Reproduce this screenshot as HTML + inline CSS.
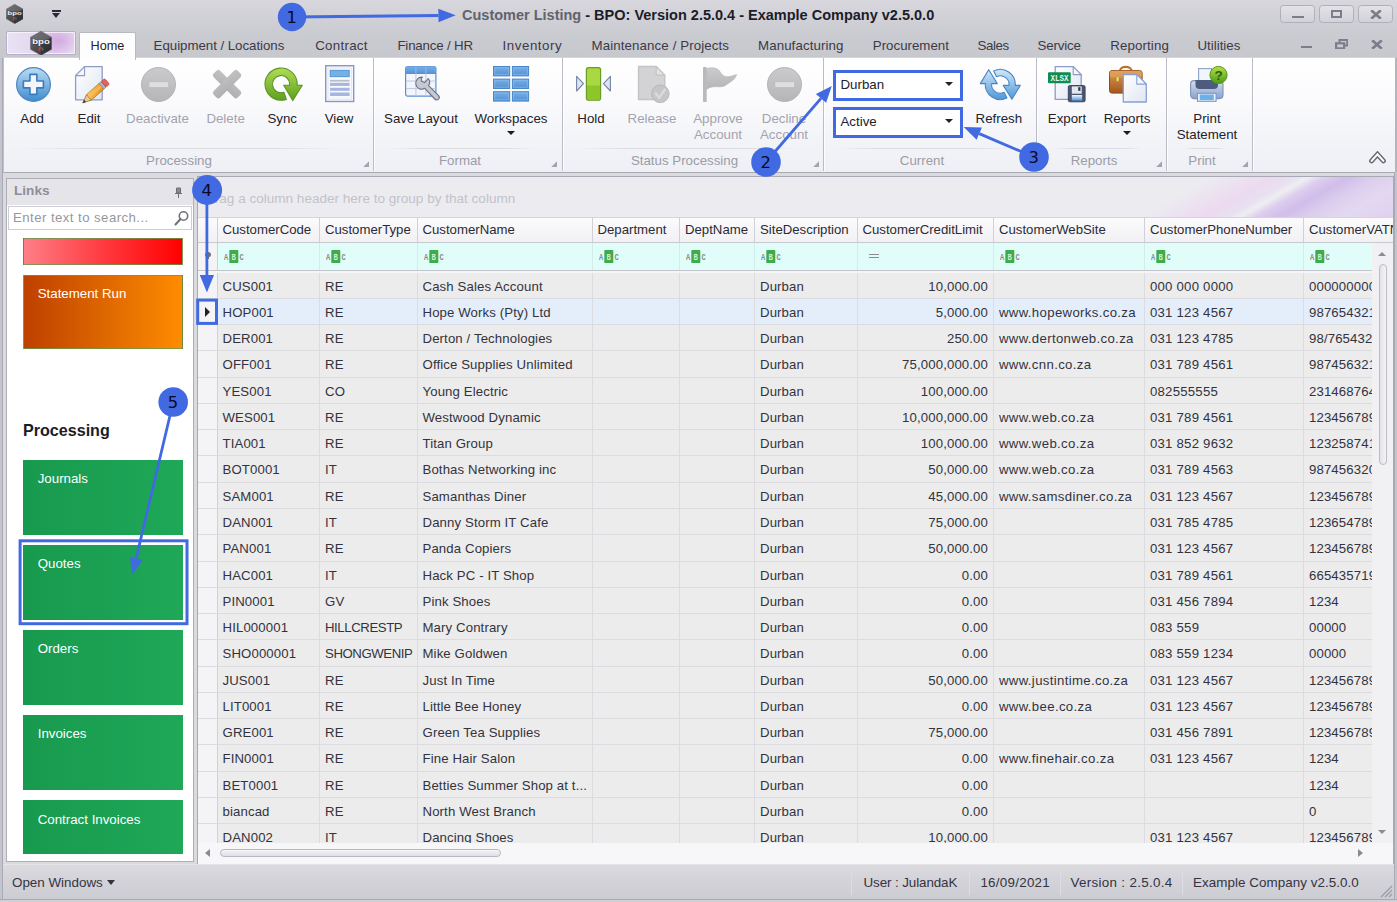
<!DOCTYPE html>
<html lang="en"><head><meta charset="utf-8"><title>Customer Listing - BPO</title>
<style>

*{box-sizing:border-box;margin:0;padding:0}
html,body{width:1397px;height:902px;overflow:hidden;background:#c9c9d0}
body{font-family:"Liberation Sans",sans-serif;font-size:13.2px;color:#2a2a34}
#app{position:relative;width:1397px;height:902px;overflow:hidden;background:#dadadf}
.abs{position:absolute}
.t{position:absolute;white-space:nowrap;line-height:16px}
/* title bar */
#title{position:absolute;left:0;top:0;width:1397px;height:32px;background:linear-gradient(#d7d7dd,#cbcbd2)}
#title .cap{position:absolute;left:462px;top:6px;font-weight:bold;font-size:14.5px;line-height:18px;white-space:nowrap;color:#1c1c28}
#title .cap i{font-style:normal;color:#62626c}
.wb{position:absolute;top:5px;height:17.5px;width:35px;border:1px solid #b0b0ba;border-radius:3.5px;background:linear-gradient(#e2e2e7,#d2d2d8)}
/* tabs */
#tabs{position:absolute;left:0;top:32px;width:1397px;height:27px;background:linear-gradient(#cbcbd2,#c7c7ce)}
#tabs .tab{position:absolute;top:6px;white-space:nowrap;color:#3a3a46;font-size:13.3px;line-height:16px}
#hometab{position:absolute;left:79px;top:32px;width:57px;height:28px;background:#fdfdfe;border:1px solid #b9b9c2;border-bottom:none;border-radius:2px 2px 0 0}
#appbtn{position:absolute;left:6px;top:31.3px;width:69.6px;height:23.4px;border:1px solid #b6b0c6;border-radius:2px;box-shadow:inset 0 0 0 1px rgba(255,255,255,.65);background:radial-gradient(ellipse 22px 14px at 76% 38%,rgba(206,160,222,.75),rgba(206,160,222,0)),linear-gradient(90deg,#e9e2f5,#e5d8f1 40%,#dfc8eb 70%,#e7d9f1)}
/* ribbon */
#ribbon{position:absolute;left:3px;top:57px;width:1393px;height:115.5px;background:linear-gradient(#ffffff,#fbfbfd 35%,#f3f4f8 70%,#eff0f5);border:1px solid #a9a9b3;border-top-color:#d4d4da;border-left-color:#c0c0c8}
.gsep{position:absolute;top:58px;width:1.3px;height:113px;background:#bcbcc6;box-shadow:1px 0 0 rgba(255,255,255,.8)}
.gcap{position:absolute;top:153px;text-align:center;color:#9b9ba6;font-size:13.3px;line-height:16px;white-space:nowrap}
.rb{position:absolute;top:110.5px;text-align:center;font-size:13.3px;line-height:16.5px;color:#22222c;white-space:nowrap;transform:translateX(-50%)}
.rb.dis{color:#a3a3ad}
.ico{position:absolute;top:66px;width:36px;height:36px}
.combo{position:absolute;left:832.5px;width:130px;height:31px;border:3px solid #4169e1;background:#fff}
.combo span{position:absolute;left:5px;top:4.5px;font-size:13.3px;line-height:16px;color:#22222c}
.combo b{position:absolute;right:6.5px;top:9.5px;width:0;height:0;border:4px solid transparent;border-top:4.5px solid #222;border-bottom:none}
/* left */
#links{position:absolute;left:6px;top:178px;width:188px;height:684px;border:1px solid #aeaeb8;background:#fff}
#links .hd{position:absolute;left:0;top:0;width:186px;height:26px;background:#e5e5e9}
#links .hd span{position:absolute;left:7px;top:4px;font-weight:bold;color:#8e8e9a;font-size:13.6px;line-height:16px}
#search{position:absolute;left:1px;top:26.5px;width:184px;height:24.5px;border:1px solid #cdcdd5;background:#fff}
#search span{position:absolute;left:4px;top:3.5px;color:#9696a0;font-size:13.2px;line-height:16px;letter-spacing:.45px}
.tile{position:absolute;left:23.2px;width:160px;color:#fff;font-size:13.3px}
.tile span{position:absolute;left:14.5px;top:11.5px;line-height:16px;white-space:nowrap}
.green{background:linear-gradient(90deg,#189a4e,#1ca254 60%,#1fa858)}
/* grid */
#grid{position:absolute;left:197px;top:176px;width:1197px;height:688.5px;border:1px solid #a9a9b3;background:#ececec;overflow:hidden}
#gp{position:absolute;left:0;top:0;width:1195px;height:40px;background:#ececf0}
#gp span{position:absolute;left:7px;top:14px;color:#c2c2ca;font-size:13.55px;line-height:16px;white-space:nowrap}
.hc{position:absolute;top:40px;height:26px;background:linear-gradient(#fbfbfc,#f1f1f4);border-right:1px solid #d0d0d8;border-bottom:1px solid #c8c8d0;border-top:1px solid #d4d4dc;overflow:hidden;white-space:nowrap;color:#2a2a36;font-size:13.2px;line-height:24px;padding-left:5px}
.fc{position:absolute;top:66px;height:27px;background:#e0fdf9;border-right:1px solid #d2ece8;overflow:hidden}
.row{position:absolute;left:0;width:1175px;height:26.27px;border-bottom:1px solid #dcdce0;background:#ececec}
.row.sel{background:#e4eefb}
.c{position:absolute;top:0;height:100%;letter-spacing:.12px;border-right:1px solid #dcdce0;overflow:hidden;white-space:nowrap;color:#33333d;font-size:13.2px;line-height:27px;padding-left:5px}
.c.r{text-align:right;padding-right:5px;padding-left:0}
.c.w{letter-spacing:.34px}
.c.p{letter-spacing:.22px}
.c.ind{background:#f4f4f6;border-right:1px solid #d0d0d8}
/* status */
#status{position:absolute;left:0;top:864px;width:1397px;height:38px;background:linear-gradient(#dadadf,#d3d3d9 40%,#cbcbd2);border-top:1px solid #e4e4e9}
#status .s{position:absolute;top:10px;font-size:13.4px;line-height:16px;color:#34343e;white-space:nowrap}
#status .sep{position:absolute;top:6px;width:1px;height:24px;background:#b0b0ba;border-right:1px solid #dcdce2}

.frame{position:absolute;background:#c4c4ce}

</style></head>
<body>
<div id="app">
<svg width="0" height="0" style="position:absolute"><defs>
<linearGradient id="gBlue" x1="0" y1="0" x2="0" y2="1"><stop offset="0" stop-color="#bcdcf2"/><stop offset="1" stop-color="#3f8ccf"/></linearGradient>
<linearGradient id="gGrey" x1="0" y1="0" x2="0" y2="1"><stop offset="0" stop-color="#cbcbcd"/><stop offset="1" stop-color="#b5b5b8"/></linearGradient>
<linearGradient id="gGreen" x1="0" y1="0" x2="0" y2="1"><stop offset="0" stop-color="#b0dc54"/><stop offset="1" stop-color="#5ca021"/></linearGradient>
<linearGradient id="gPage" x1="0" y1="0" x2="1" y2="1"><stop offset="0" stop-color="#ffffff"/><stop offset="1" stop-color="#dfe5f2"/></linearGradient>
<linearGradient id="gCell" x1="0" y1="0" x2="0" y2="1"><stop offset="0" stop-color="#78b0e6"/><stop offset="1" stop-color="#5090d4"/></linearGradient>
<linearGradient id="gPencil" x1="0" y1="0" x2="1" y2="1"><stop offset="0" stop-color="#ffcf6a"/><stop offset="1" stop-color="#e58a1f"/></linearGradient>
<linearGradient id="gBrown" x1="0" y1="0" x2="0" y2="1"><stop offset="0" stop-color="#dc9a58"/><stop offset="1" stop-color="#a4561c"/></linearGradient>
<linearGradient id="gPrn" x1="0" y1="0" x2="0" y2="1"><stop offset="0" stop-color="#d4dff0"/><stop offset="1" stop-color="#8ba2cc"/></linearGradient>
<linearGradient id="gGrey2" x1="0" y1="0" x2="1" y2="1"><stop offset="0" stop-color="#c2c2c4"/><stop offset="1" stop-color="#aeaeb1"/></linearGradient>
<linearGradient id="gBlue2" gradientUnits="userSpaceOnUse" x1="0" y1="0" x2="0" y2="31"><stop offset="0" stop-color="#d4e9f9"/><stop offset="1" stop-color="#4f96d6"/></linearGradient>
<linearGradient id="gGreen2" x1="0" y1="0" x2="0" y2="1"><stop offset="0" stop-color="#b4e044"/><stop offset="1" stop-color="#4c9a18"/></linearGradient>
<linearGradient id="gStrip" x1="0" y1="0" x2="0" y2="1"><stop offset="0" stop-color="#f4f8fd"/><stop offset="1" stop-color="#4f96d8"/></linearGradient>
<linearGradient id="gHex" x1="0" y1="0" x2="1" y2="1"><stop offset="0" stop-color="#6e6e72"/><stop offset="1" stop-color="#2c2c30"/></linearGradient>
</defs></svg>
<div id="title">
<svg class="abs" style="left:5.6px;top:4.3px" width="17.4" height="20" viewBox="0 0 22 25"><path d="M11,.3L21.700,6.400V18.600L11,24.700L.3,18.600V6.400Z" fill="url(#gHex)" stroke="#6a6a6e" stroke-width=".6"/><path d="M11,.3L21.700,6.400L11,12.500L.3,6.400Z" fill="#77777b" opacity=".55"/><path d="M11,12.500L21.700,6.400V18.600L11,24.700Z" fill="#2a2a2e" opacity=".45"/><rect x="2.500" y="9" width="17" height="5.200" fill="#3c3c40" opacity=".55"/><text x="11" y="13.600" text-anchor="middle" font-family="Liberation Sans, sans-serif" font-weight="bold" font-size="6.8" fill="#f2f2f4" textLength="18" lengthAdjust="spacingAndGlyphs">bpo</text><path d="M8.500,16.200h3.200v1.800h-1.400v2.600h-1.800z" fill="#c0403c"/><rect x="11.800" y="17" width="1.600" height="3" fill="#4a8a8a" opacity=".7"/></svg>
<div class="abs" style="left:52px;top:10px;width:9px;height:2px;background:#2a2a3c"></div><div class="abs" style="left:52px;top:13px;width:0;height:0;border:4.500px solid transparent;border-top:5px solid #2a2a3c;border-bottom:none"></div>
<div class="cap"><i>Customer Listing</i> - BPO: Version 2.5.0.4 - Example Company v2.5.0.0</div>
<div class="wb" style="left:1280.2px"><div class="abs" style="left:11.2px;top:9.5px;width:11.3px;height:2.5px;background:#7c7c8a"></div></div>
<div class="wb" style="left:1318.9px"><div class="abs" style="left:11.2px;top:3.5px;width:11px;height:8.6px;border:2.2px solid #7c7c8a"></div></div>
<div class="wb" style="left:1357.5px"><svg class="abs" style="left:11.2px;top:3.5px" width="12" height="9" viewBox="0 0 12 9"><path d="M1.2,.3l9.600,8.400M10.800,.3l-9.600,8.400" stroke="#7c7c8a" stroke-width="2.700"/></svg></div>
</div>
<div id="tabs">
<div class="tab" style="left:153.6px;letter-spacing:-0.04px">Equipment / Locations</div>
<div class="tab" style="left:315.2px;letter-spacing:0.29px">Contract</div>
<div class="tab" style="left:397.4px;letter-spacing:-0.17px">Finance / HR</div>
<div class="tab" style="left:502.6px;letter-spacing:0.54px">Inventory</div>
<div class="tab" style="left:591.6px;letter-spacing:0.1px">Maintenance / Projects</div>
<div class="tab" style="left:758px;letter-spacing:0.09px">Manufacturing</div>
<div class="tab" style="left:872.8px;letter-spacing:0px">Procurement</div>
<div class="tab" style="left:977.6px;letter-spacing:-0.44px">Sales</div>
<div class="tab" style="left:1037.5px;letter-spacing:-0.16px">Service</div>
<div class="tab" style="left:1110.2px;letter-spacing:0.12px">Reporting</div>
<div class="tab" style="left:1197.5px;letter-spacing:0px">Utilities</div>
<div class="abs" style="left:1301.1px;top:13.600px;width:11px;height:2.500px;background:#7c7c8a"></div>
<svg class="abs" style="left:1335px;top:6.600px" width="13.400" height="10.500" viewBox="0 0 13.400 10.500"><path d="M4.500,3.500V1.100H12.300V6.500H9.500" fill="none" stroke="#7c7c8a" stroke-width="2"/><rect x="1.100" y="4.300" width="8" height="5.100" fill="none" stroke="#7c7c8a" stroke-width="2.200"/></svg>
<svg class="abs" style="left:1370.700px;top:7.600px" width="12" height="9" viewBox="0 0 12 9"><path d="M1.200,.3l9.600,8.400M10.800,.3l-9.600,8.400" stroke="#7c7c8a" stroke-width="2.700"/></svg>
</div>
<div id="appbtn"></div>
<svg class="abs" style="left:29.6px;top:30.9px" width="22" height="24.6" viewBox="0 0 22 25"><path d="M11,.3L21.700,6.400V18.600L11,24.700L.3,18.600V6.400Z" fill="url(#gHex)" stroke="#6a6a6e" stroke-width=".6"/><path d="M11,.3L21.700,6.400L11,12.500L.3,6.400Z" fill="#77777b" opacity=".55"/><path d="M11,12.500L21.700,6.400V18.600L11,24.700Z" fill="#2a2a2e" opacity=".45"/><rect x="2.500" y="9" width="17" height="5.200" fill="#3c3c40" opacity=".55"/><text x="11" y="13.600" text-anchor="middle" font-family="Liberation Sans, sans-serif" font-weight="bold" font-size="6.8" fill="#f2f2f4" textLength="18" lengthAdjust="spacingAndGlyphs">bpo</text><path d="M8.500,16.200h3.200v1.800h-1.400v2.600h-1.800z" fill="#c0403c"/><rect x="11.800" y="17" width="1.600" height="3" fill="#4a8a8a" opacity=".7"/></svg>
<div id="ribbon"></div>
<div id="hometab"><div class="t" style="left:10.5px;top:5px;font-size:12.7px;color:#22222c">Home</div></div>
<div class="gsep" style="left:372.5px"></div>
<div class="gsep" style="left:561.5px"></div>
<div class="gsep" style="left:822.5px"></div>
<div class="gsep" style="left:1036px"></div>
<div class="gsep" style="left:1166px"></div>
<div class="gsep" style="left:1252px"></div>
<div class="gcap" style="left:3px;width:352px">Processing</div>
<div class="abs" style="left:21px;top:148px;width:322px;height:1px;background:linear-gradient(90deg,rgba(220,220,228,0),#dcdce4 20%,#dcdce4 80%,rgba(220,220,228,0))"></div>
<div class="gcap" style="left:372px;width:176px">Format</div>
<div class="abs" style="left:390px;top:148px;width:146px;height:1px;background:linear-gradient(90deg,rgba(220,220,228,0),#dcdce4 20%,#dcdce4 80%,rgba(220,220,228,0))"></div>
<div class="gcap" style="left:561px;width:247px">Status Processing</div>
<div class="abs" style="left:579px;top:148px;width:217px;height:1px;background:linear-gradient(90deg,rgba(220,220,228,0),#dcdce4 20%,#dcdce4 80%,rgba(220,220,228,0))"></div>
<div class="gcap" style="left:822px;width:200px">Current</div>
<div class="abs" style="left:840px;top:148px;width:170px;height:1px;background:linear-gradient(90deg,rgba(220,220,228,0),#dcdce4 20%,#dcdce4 80%,rgba(220,220,228,0))"></div>
<div class="gcap" style="left:1034px;width:120px">Reports</div>
<div class="abs" style="left:1052px;top:148px;width:90px;height:1px;background:linear-gradient(90deg,rgba(220,220,228,0),#dcdce4 20%,#dcdce4 80%,rgba(220,220,228,0))"></div>
<div class="gcap" style="left:1166px;width:72px">Print</div>
<div class="abs" style="left:1184px;top:148px;width:42px;height:1px;background:linear-gradient(90deg,rgba(220,220,228,0),#dcdce4 20%,#dcdce4 80%,rgba(220,220,228,0))"></div>
<svg class="abs" style="left:362.8px;top:160.800px" width="6.200" height="6.200" viewBox="0 0 7 7"><path d="M7 0v7H0z" fill="#a4a4ae"/></svg>
<svg class="abs" style="left:551.0px;top:160.800px" width="6.200" height="6.200" viewBox="0 0 7 7"><path d="M7 0v7H0z" fill="#a4a4ae"/></svg>
<svg class="abs" style="left:812.5px;top:160.800px" width="6.200" height="6.200" viewBox="0 0 7 7"><path d="M7 0v7H0z" fill="#a4a4ae"/></svg>
<svg class="abs" style="left:1155.5px;top:160.800px" width="6.200" height="6.200" viewBox="0 0 7 7"><path d="M7 0v7H0z" fill="#a4a4ae"/></svg>
<svg class="abs" style="left:1242.3px;top:160.800px" width="6.200" height="6.200" viewBox="0 0 7 7"><path d="M7 0v7H0z" fill="#a4a4ae"/></svg>
<svg class="abs" style="left:15.9px;top:66.9px;overflow:visible" width="35" height="35" viewBox="0 0 35 35"><circle cx="17.5" cy="17.5" r="16.9" fill="url(#gBlue)" stroke="#4b88c4" stroke-width="1.2"/><path d="M13.95,7.399999999999999h6.9v6.55h6.55v6.9h-6.55v6.55h-6.9v-6.55h-6.55v-6.9h6.55z" fill="#f2f6fb" stroke="#3b7bbd" stroke-width="1.6" stroke-linejoin="round"/></svg><div class="rb" style="left:32.2px">Add</div>
<svg class="abs" style="left:74.6px;top:65.8px;overflow:visible" width="36" height="38" viewBox="0 0 36 38"><path d="M9.6,0.6H27.200000000000003V33.800000000000004H0.6V9.6Z" fill="url(#gPage)" stroke="#8d9cc6" stroke-width="1.3" stroke-linejoin="round"/><path d="M0.6,9.6H9.6V0.6Z" fill="#f4f6fb" stroke="#8d9cc6" stroke-width="1.1" stroke-linejoin="round"/><g transform="translate(7.7,37) rotate(-41.7)"><path d="M0,0L8.5,-3.700V3.700Z" fill="#ecc894" stroke="#8a6a3a" stroke-width=".7" stroke-linejoin="round"/><path d="M0,0L3.2,-1.5V1.5Z" fill="#3a3a3a"/><rect x="8.500" y="-3.700" width="16.500" height="7.400" fill="url(#gPencil)" stroke="#b8741a" stroke-width=".7"/><rect x="8.500" y="-1.3" width="16.500" height="2.2" fill="#f6c050" opacity=".8"/><rect x="25" y="-3.700" width="3" height="7.400" fill="#a9b2c4" stroke="#7a8498" stroke-width=".6"/><rect x="28" y="-3.700" width="4.600" height="7.400" rx="1.600" fill="#e8625c" stroke="#b8403c" stroke-width=".7"/></g></svg><div class="rb" style="left:89px">Edit</div>
<svg class="abs" style="left:141px;top:66.9px;overflow:visible" width="35" height="35" viewBox="0 0 35 35"><circle cx="17.5" cy="17.5" r="17" fill="url(#gGrey)" stroke="#b4b4b7" stroke-width="1"/><rect x="7.8" y="14.6" width="19.8" height="6" rx="1.2" fill="#dededf" stroke="#bcbcbf" stroke-width=".9"/></svg><div class="rb dis" style="left:157.5px">Deactivate</div>
<svg class="abs" style="left:211.9px;top:69.3px;overflow:visible" width="30.2" height="30.4" viewBox="0 0 30.2 30.4"><g transform="rotate(45 15.1 15.2)" fill="url(#gGrey2)"><rect x="-1.9" y="10.6" width="34" height="9.200" rx="2.6"/><rect x="10.500" y="-1.8" width="9.200" height="34" rx="2.6"/></g></svg><div class="rb dis" style="left:225.6px">Delete</div>
<svg class="abs" style="left:264.7px;top:67.9px;overflow:visible" width="37.6" height="33" viewBox="0 0 37.6 33"><path d="M18.7,17.2L24.7,17.2L24.7,16.15A8.6,8.6 0 1 0 18.9,24.28L21.34,31.37A16.1,16.1 0 1 1 32.2,16.15L32.2,17.2L37.3,17.2L27.7,32.6Z" fill="url(#gGreen)" stroke="#5b9422" stroke-width="1.1" stroke-linejoin="round"/></svg><div class="rb" style="left:282.2px">Sync</div>
<svg class="abs" style="left:324.9px;top:64.7px;overflow:visible" width="29.4" height="37.2" viewBox="0 0 29.4 37.2"><rect x=".7" y=".7" width="28" height="35.800" fill="#f7f9fd" stroke="#8b95bf" stroke-width="1.4"/><rect x="3" y="3" width="23.4" height="31.2" fill="none" stroke="#e1e6f3" stroke-width="1"/><rect x="5.200" y="5.300" width="19" height="6.400" fill="#74b2e6" stroke="#4f8fd0" stroke-width=".9"/><rect x="5" y="14.9" width="19.600" height="1.700" fill="#bcbcc6"/><rect x="5" y="17.800" width="19.600" height="3.100" fill="#a6b6de"/><rect x="5" y="22.800" width="19.600" height="3" fill="#a6b6de"/><rect x="5" y="27.500" width="19.600" height="3.500" fill="#a6b6de"/></svg><div class="rb" style="left:339px">View</div>
<svg class="abs" style="left:404.5px;top:65.9px;overflow:visible" width="36" height="36" viewBox="0 0 36 36"><rect x=".6" y=".6" width="30.300" height="29.600" rx="2" fill="#f2f5fb" stroke="#5c8fd0" stroke-width="1.2"/><path d="M.6,8.100V2.600a2,2 0 0 1 2,-2H28.900a2,2 0 0 1 2,2V8.100Z" fill="url(#gCell)"/><g stroke="#b9cbe8" stroke-width="1"><path d="M1,15H30.500M1,22.600H30.500M10.900,8.100V30M20.900,8.100V30"/></g><g stroke="#8fb9e8" stroke-width="1"><path d="M10.900,1V8.100M20.900,1V8.100"/></g><g fill="#c5c9d2" stroke="#6c7180" stroke-width="1.100" stroke-linejoin="round"><path d="M17.500,11.200A6,6 0 1 0 19.800,22.300L29.800,33A2.500,2.500 0 0 0 33.600,29.600L23.600,19.600A6,6 0 0 0 23.300,12.500L19.600,16.600L16.400,15.300L16.300,12.300Z"/></g></svg><div class="rb" style="left:421px">Save Layout</div>
<svg class="abs" style="left:493.3px;top:65.9px;overflow:visible" width="36.5" height="35.7" viewBox="0 0 36.5 35.7"><rect x="0.5" y="0.5" width="16.200" height="9.400" fill="url(#gCell)" stroke="#4a86c8" stroke-width="1"/><rect x="1.8" y="1.8" width="13.600" height="6.800" fill="none" stroke="#8bbcec" stroke-width=".8" opacity=".8"/><rect x="0.5" y="13.1" width="16.200" height="9.400" fill="url(#gCell)" stroke="#4a86c8" stroke-width="1"/><rect x="1.8" y="14.4" width="13.600" height="6.800" fill="none" stroke="#8bbcec" stroke-width=".8" opacity=".8"/><rect x="0.5" y="25.7" width="16.200" height="9.400" fill="url(#gCell)" stroke="#4a86c8" stroke-width="1"/><rect x="1.8" y="27.0" width="13.600" height="6.800" fill="none" stroke="#8bbcec" stroke-width=".8" opacity=".8"/><rect x="19.4" y="0.5" width="16.200" height="9.400" fill="url(#gCell)" stroke="#4a86c8" stroke-width="1"/><rect x="20.7" y="1.8" width="13.600" height="6.800" fill="none" stroke="#8bbcec" stroke-width=".8" opacity=".8"/><rect x="19.4" y="13.1" width="16.200" height="9.400" fill="url(#gCell)" stroke="#4a86c8" stroke-width="1"/><rect x="20.7" y="14.4" width="13.600" height="6.800" fill="none" stroke="#8bbcec" stroke-width=".8" opacity=".8"/><rect x="19.4" y="25.7" width="16.200" height="9.400" fill="url(#gCell)" stroke="#4a86c8" stroke-width="1"/><rect x="20.7" y="27.0" width="13.600" height="6.800" fill="none" stroke="#8bbcec" stroke-width=".8" opacity=".8"/></svg><div class="rb" style="left:511px">Workspaces</div><div class="abs" style="left:506.8px;top:131px;width:0;height:0;border:4.2px solid transparent;border-top:4.500px solid #1c1c26;border-bottom:none"></div>
<svg class="abs" style="left:575.8px;top:67px;overflow:visible" width="35" height="33.8" viewBox="0 0 35 33.8"><path d="M.6,9.300L7.500,16.700L.6,24Z" fill="#dde4f2" stroke="#7482a4" stroke-width="1.100" stroke-linejoin="round"/><path d="M34.400,9.300L27.500,16.700L34.400,24Z" fill="#dde4f2" stroke="#7482a4" stroke-width="1.100" stroke-linejoin="round"/><rect x="10.400" y=".6" width="14.200" height="32.600" rx="2.200" fill="#a9d842" stroke="#6a9c28" stroke-width="1.200"/><path d="M11,18.500H24V31a1.600,1.600 0 0 1 -1.600,1.600H12.600A1.600,1.600 0 0 1 11,31Z" fill="#8ec62a"/></svg><div class="rb" style="left:591px">Hold</div>
<svg class="abs" style="left:638.3px;top:65.8px;overflow:visible" width="33" height="38" viewBox="0 0 33 38"><path d="M0.5,0.5H18.200000000000003L26.8,9.1V33.5H0.5Z" fill="#d3d3d5" stroke="#c3c3c6" stroke-width="1.3" stroke-linejoin="round"/><path d="M18.200000000000003,0.5V9.1H26.8Z" fill="#e4e4e6" stroke="#c3c3c6" stroke-width="1.1" stroke-linejoin="round"/><circle cx="22.300" cy="27.800" r="8.800" fill="#c6c6c9" stroke="#b8b8bb" stroke-width="1"/><path d="M17.800,27.500l3.400,4.300l5.600,-8.300" fill="none" stroke="#dcdcde" stroke-width="2.300" stroke-linecap="round" stroke-linejoin="round"/></svg><div class="rb dis" style="left:652px">Release</div>
<svg class="abs" style="left:703.1px;top:67px;overflow:visible" width="34" height="35" viewBox="0 0 34 35"><rect x="0" y="0" width="3.700" height="34.900" rx="1" fill="#b9b9bc"/><path d="M3.700,1.400C8,0.300 13,0.500 15.500,2.800C18,5.500 19,9.500 24,9.800C28,9.800 31,8 33.700,7.600C32.500,11 30,13.500 27,15.200C24,17 22,19.800 17.500,19.800C13,19.800 8,18.800 3.700,22.400Z" fill="url(#gGrey)" stroke="#b6b6b9" stroke-width=".6"/></svg><div class="rb dis" style="left:718px">Approve<br>Account</div>
<svg class="abs" style="left:767.1px;top:66.9px;overflow:visible" width="35" height="35" viewBox="0 0 35 35"><circle cx="17.5" cy="17.5" r="17" fill="url(#gGrey)" stroke="#b4b4b7" stroke-width="1"/><rect x="7.8" y="14.6" width="19.8" height="6" rx="1.2" fill="#dededf" stroke="#bcbcbf" stroke-width=".9"/></svg><div class="rb dis" style="left:784px">Decline<br>Account</div>
<div class="combo" style="top:69.6px"><span>Durban</span><b></b></div>
<div class="combo" style="top:106.7px"><span>Active</span><b></b></div>
<svg class="abs" style="left:979.6px;top:69px;overflow:visible" width="40.6" height="31" viewBox="0 0 40.6 31"><g fill="url(#gBlue2)" stroke="#4686c6" stroke-width="1.100" stroke-linejoin="round"><path d="M0.3,14.6L8.7,0.7L17.3,14.6L11.6,14.6A8.700,8.700 0 0 0 24.100,23.300L26.900,29A15,15 0 0 1 5.300,14.600Z"/><path d="M40.3,16.4L31.900,30.300L23.300,16.400L29,16.400A8.700,8.700 0 0 0 16.500,7.700L13.700,2A15,15 0 0 1 35.300,16.400Z"/></g></svg><div class="rb" style="left:998.9px">Refresh</div>
<svg class="abs" style="left:1048.3px;top:65.8px;overflow:visible" width="38" height="37" viewBox="0 0 38 37"><path d="M7.2,0.6H25.200000000000003L33.2,8.6V33.4H7.2Z" fill="url(#gPage)" stroke="#8d9cc6" stroke-width="1.3" stroke-linejoin="round"/><path d="M25.200000000000003,0.6V8.6H33.2Z" fill="#f4f6fb" stroke="#8d9cc6" stroke-width="1.1" stroke-linejoin="round"/><rect x="0" y="6.200" width="22.700" height="11" rx="1" fill="#0f8c52"/><text x="11.400" y="15" text-anchor="middle" font-family="Liberation Mono, DejaVu Sans Mono, monospace" font-weight="bold" font-size="8.600" fill="#e8f6ee" textLength="18" lengthAdjust="spacingAndGlyphs">XLSX</text><rect x="20.300" y="19.500" width="16.800" height="16.300" rx="1.500" fill="#4b5772" stroke="#364058" stroke-width=".9"/><rect x="23.800" y="20.400" width="9.900" height="7.300" fill="#e3e7ef"/><rect x="30.200" y="21.200" width="2.200" height="3.600" fill="#2c3448"/><rect x="23.800" y="29" width="10.300" height="5.600" fill="url(#gStrip)"/></svg><div class="rb" style="left:1067px">Export</div>
<svg class="abs" style="left:1108.5px;top:64.5px;overflow:visible" width="38" height="38" viewBox="0 0 38 38"><path d="M11,6C11,0.500 22.500,0.500 22.500,6" fill="none" stroke="#b8722e" stroke-width="2.200"/><rect x=".5" y="5.500" width="32.600" height="22.600" rx="2.500" fill="url(#gBrown)" stroke="#8e4c18" stroke-width="1"/><rect x=".5" y="5.500" width="32.600" height="7" rx="2.500" fill="#e8a864" opacity=".55"/><rect x="7.200" y="11.500" width="2.800" height="5" rx="1.200" fill="#f6dc72" stroke="#a88420" stroke-width=".6"/><path d="M14.3,9.6H27.799999999999997L37.3,19.1V37.0H14.3Z" fill="url(#gPage)" stroke="#86a0d4" stroke-width="1.3" stroke-linejoin="round"/><path d="M27.799999999999997,9.6V19.1H37.3Z" fill="#f4f6fb" stroke="#86a0d4" stroke-width="1.1" stroke-linejoin="round"/></svg><div class="rb" style="left:1127px">Reports</div><div class="abs" style="left:1122.8px;top:131px;width:0;height:0;border:4.2px solid transparent;border-top:4.500px solid #1c1c26;border-bottom:none"></div>
<svg class="abs" style="left:1189.7px;top:66px;overflow:visible" width="38" height="36" viewBox="0 0 38 36"><rect x="8.600" y="2.600" width="12.900" height="14" fill="#f2f5fb" stroke="#8ea4cc" stroke-width="1.100"/><rect x=".6" y="14.600" width="32.400" height="18" rx="3.500" fill="url(#gPrn)" stroke="#7d93bd" stroke-width="1.100"/><path d="M5.500,14H28V19a4,4 0 0 1 -4,4H9.500a4,4 0 0 1 -4,-4Z" fill="#4d5c7c"/><rect x="7.500" y="27.300" width="18.600" height="8" fill="#eaf2fc" stroke="#7f97c4" stroke-width="1.100"/><rect x="9.800" y="28.500" width="14" height="5.600" fill="#6cb0e8"/><circle cx="28.500" cy="9" r="8.600" fill="url(#gGreen2)" stroke="#4f961c" stroke-width="1"/><text x="28.500" y="13.800" text-anchor="middle" font-family="Liberation Sans, sans-serif" font-weight="bold" font-size="13.500" fill="#2f5c0c">?</text></svg><div class="rb" style="left:1207px">Print<br>Statement</div>
<svg class="abs" style="left:1368.800px;top:151.400px" width="17" height="14" viewBox="0 0 17 14"><path d="M2.600,9.900L8.500,3.300L14.400,9.900" fill="none" stroke="#686872" stroke-width="4.900" stroke-linejoin="miter" stroke-linecap="round"/><path d="M2.600,9.900L8.500,3.300L14.400,9.900" fill="none" stroke="#fbfbfd" stroke-width="2.100" stroke-linejoin="miter" stroke-linecap="round"/></svg>
<div id="links">
<div class="hd"><span>Links</span><svg class="abs" style="left:166.500px;top:8px" width="9" height="11" viewBox="0 0 9 11"><path d="M2.500 1h4v5h-4zM1 6.500h7M4.500 6.500V11" fill="#8a8a94" stroke="#6e6e78" stroke-width="1"/></svg></div>
<div id="search"><span>Enter text to search...</span><svg class="abs" style="left:164.500px;top:3.500px" width="16" height="16" viewBox="0 0 16 16"><circle cx="9.500" cy="6" r="4.200" fill="none" stroke="#70707a" stroke-width="1.600"/><path d="M6.500 9l-5 5.500" stroke="#70707a" stroke-width="2" stroke-linecap="round"/></svg></div>
</div>
<div class="tile" style="top:238px;height:27px;background:linear-gradient(90deg,#ff7e86,#ff3a40 50%,#ff0000);border:1px solid rgba(90,160,80,.75)"></div>
<div class="tile" style="top:275px;height:74px;background:linear-gradient(90deg,#bf4000,#e06a00 55%,#ff8c00);border:1px solid rgba(90,160,80,.75)"><span style="top:9.800px;left:13.500px">Statement Run</span></div>
<div class="t" style="left:23px;top:420px;font-weight:bold;font-size:16.100px;line-height:20px;color:#1c1c26">Processing</div>
<div class="tile green" style="top:459.7px;height:75px"><span>Journals</span></div>
<div class="tile green" style="top:544.7px;height:75px"><span>Quotes</span></div>
<div class="tile green" style="top:629.8px;height:75px"><span>Orders</span></div>
<div class="tile green" style="top:714.9px;height:75px"><span>Invoices</span></div>
<div class="tile green" style="top:800px;height:53.5px"><span>Contract Invoices</span></div>
<div id="grid">
<div id="gp"><div class="abs" style="left:937px;top:0;width:259px;height:40px;background:linear-gradient(150deg,rgba(236,236,240,0) 22%,rgba(236,216,240,.9) 42%,#e8e0f1 49%,#eeeef2 53%,#dccdee 58%,#d1bdea 65%,#dccfee 74%,#e3d8f1 84%,#ded1ef 100%)"></div><span>Drag a column header here to group by that column</span></div>
<div class="hc" style="left:0px;width:19.5px"></div>
<div class="hc" style="left:19.5px;width:102.5px">CustomerCode</div>
<div class="hc" style="left:122px;width:97.5px">CustomerType</div>
<div class="hc" style="left:219.5px;width:175.0px">CustomerName</div>
<div class="hc" style="left:394.5px;width:87.5px">Department</div>
<div class="hc" style="left:482px;width:75px">DeptName</div>
<div class="hc" style="left:557px;width:102.5px">SiteDescription</div>
<div class="hc" style="left:659.5px;width:136.5px">CustomerCreditLimit</div>
<div class="hc" style="left:796px;width:151px">CustomerWebSite</div>
<div class="hc" style="left:947px;width:159px">CustomerPhoneNumber</div>
<div class="hc" style="left:1106px;width:90px">CustomerVATNumber</div>
<div class="fc" style="left:0;width:19.5px;background:#f4f4f6;border-right:1px solid #d0d0d8"><div class="abs" style="left:6.500px;top:9px;width:6px;height:4.500px;border-radius:3px 3px 2px 2px;background:#6e6e7a"></div><div class="abs" style="left:9px;top:12.500px;width:1.500px;height:3px;background:#6e6e7a"></div></div>
<div class="fc" style="left:19.5px;width:102.5px"><svg class="abs" style="left:6.3px;top:6.8px" width="20" height="13.2" viewBox="0 0 20 13.2"><rect x="5.300" y="0" width="9" height="13.200" rx=".8" fill="#3fab4a"/><text x="0" y="9.800" font-family="Liberation Mono, monospace" font-weight="bold" font-size="8.200" fill="#7d8d8d" textLength="4.200" lengthAdjust="spacingAndGlyphs">A</text><text x="7.600" y="9.800" font-family="Liberation Mono, monospace" font-weight="bold" font-size="8.200" fill="#cfeed2" textLength="4.400" lengthAdjust="spacingAndGlyphs">B</text><text x="15.400" y="9.800" font-family="Liberation Mono, monospace" font-weight="bold" font-size="8.200" fill="#7d8d8d" textLength="4.200" lengthAdjust="spacingAndGlyphs">C</text></svg></div>
<div class="fc" style="left:122px;width:97.5px"><svg class="abs" style="left:6.3px;top:6.8px" width="20" height="13.2" viewBox="0 0 20 13.2"><rect x="5.300" y="0" width="9" height="13.200" rx=".8" fill="#3fab4a"/><text x="0" y="9.800" font-family="Liberation Mono, monospace" font-weight="bold" font-size="8.200" fill="#7d8d8d" textLength="4.200" lengthAdjust="spacingAndGlyphs">A</text><text x="7.600" y="9.800" font-family="Liberation Mono, monospace" font-weight="bold" font-size="8.200" fill="#cfeed2" textLength="4.400" lengthAdjust="spacingAndGlyphs">B</text><text x="15.400" y="9.800" font-family="Liberation Mono, monospace" font-weight="bold" font-size="8.200" fill="#7d8d8d" textLength="4.200" lengthAdjust="spacingAndGlyphs">C</text></svg></div>
<div class="fc" style="left:219.5px;width:175.0px"><svg class="abs" style="left:6.3px;top:6.8px" width="20" height="13.2" viewBox="0 0 20 13.2"><rect x="5.300" y="0" width="9" height="13.200" rx=".8" fill="#3fab4a"/><text x="0" y="9.800" font-family="Liberation Mono, monospace" font-weight="bold" font-size="8.200" fill="#7d8d8d" textLength="4.200" lengthAdjust="spacingAndGlyphs">A</text><text x="7.600" y="9.800" font-family="Liberation Mono, monospace" font-weight="bold" font-size="8.200" fill="#cfeed2" textLength="4.400" lengthAdjust="spacingAndGlyphs">B</text><text x="15.400" y="9.800" font-family="Liberation Mono, monospace" font-weight="bold" font-size="8.200" fill="#7d8d8d" textLength="4.200" lengthAdjust="spacingAndGlyphs">C</text></svg></div>
<div class="fc" style="left:394.5px;width:87.5px"><svg class="abs" style="left:6.3px;top:6.8px" width="20" height="13.2" viewBox="0 0 20 13.2"><rect x="5.300" y="0" width="9" height="13.200" rx=".8" fill="#3fab4a"/><text x="0" y="9.800" font-family="Liberation Mono, monospace" font-weight="bold" font-size="8.200" fill="#7d8d8d" textLength="4.200" lengthAdjust="spacingAndGlyphs">A</text><text x="7.600" y="9.800" font-family="Liberation Mono, monospace" font-weight="bold" font-size="8.200" fill="#cfeed2" textLength="4.400" lengthAdjust="spacingAndGlyphs">B</text><text x="15.400" y="9.800" font-family="Liberation Mono, monospace" font-weight="bold" font-size="8.200" fill="#7d8d8d" textLength="4.200" lengthAdjust="spacingAndGlyphs">C</text></svg></div>
<div class="fc" style="left:482px;width:75px"><svg class="abs" style="left:6.3px;top:6.8px" width="20" height="13.2" viewBox="0 0 20 13.2"><rect x="5.300" y="0" width="9" height="13.200" rx=".8" fill="#3fab4a"/><text x="0" y="9.800" font-family="Liberation Mono, monospace" font-weight="bold" font-size="8.200" fill="#7d8d8d" textLength="4.200" lengthAdjust="spacingAndGlyphs">A</text><text x="7.600" y="9.800" font-family="Liberation Mono, monospace" font-weight="bold" font-size="8.200" fill="#cfeed2" textLength="4.400" lengthAdjust="spacingAndGlyphs">B</text><text x="15.400" y="9.800" font-family="Liberation Mono, monospace" font-weight="bold" font-size="8.200" fill="#7d8d8d" textLength="4.200" lengthAdjust="spacingAndGlyphs">C</text></svg></div>
<div class="fc" style="left:557px;width:102.5px"><svg class="abs" style="left:6.3px;top:6.8px" width="20" height="13.2" viewBox="0 0 20 13.2"><rect x="5.300" y="0" width="9" height="13.200" rx=".8" fill="#3fab4a"/><text x="0" y="9.800" font-family="Liberation Mono, monospace" font-weight="bold" font-size="8.200" fill="#7d8d8d" textLength="4.200" lengthAdjust="spacingAndGlyphs">A</text><text x="7.600" y="9.800" font-family="Liberation Mono, monospace" font-weight="bold" font-size="8.200" fill="#cfeed2" textLength="4.400" lengthAdjust="spacingAndGlyphs">B</text><text x="15.400" y="9.800" font-family="Liberation Mono, monospace" font-weight="bold" font-size="8.200" fill="#7d8d8d" textLength="4.200" lengthAdjust="spacingAndGlyphs">C</text></svg></div>
<div class="fc" style="left:659.5px;width:136.5px"><div class="abs" style="left:11px;top:11px;width:10px;height:1px;background:#8a8a92"></div><div class="abs" style="left:11px;top:14px;width:10px;height:1px;background:#8a8a92"></div></div>
<div class="fc" style="left:796px;width:151px"><svg class="abs" style="left:6.3px;top:6.8px" width="20" height="13.2" viewBox="0 0 20 13.2"><rect x="5.300" y="0" width="9" height="13.200" rx=".8" fill="#3fab4a"/><text x="0" y="9.800" font-family="Liberation Mono, monospace" font-weight="bold" font-size="8.200" fill="#7d8d8d" textLength="4.200" lengthAdjust="spacingAndGlyphs">A</text><text x="7.600" y="9.800" font-family="Liberation Mono, monospace" font-weight="bold" font-size="8.200" fill="#cfeed2" textLength="4.400" lengthAdjust="spacingAndGlyphs">B</text><text x="15.400" y="9.800" font-family="Liberation Mono, monospace" font-weight="bold" font-size="8.200" fill="#7d8d8d" textLength="4.200" lengthAdjust="spacingAndGlyphs">C</text></svg></div>
<div class="fc" style="left:947px;width:159px"><svg class="abs" style="left:6.3px;top:6.8px" width="20" height="13.2" viewBox="0 0 20 13.2"><rect x="5.300" y="0" width="9" height="13.200" rx=".8" fill="#3fab4a"/><text x="0" y="9.800" font-family="Liberation Mono, monospace" font-weight="bold" font-size="8.200" fill="#7d8d8d" textLength="4.200" lengthAdjust="spacingAndGlyphs">A</text><text x="7.600" y="9.800" font-family="Liberation Mono, monospace" font-weight="bold" font-size="8.200" fill="#cfeed2" textLength="4.400" lengthAdjust="spacingAndGlyphs">B</text><text x="15.400" y="9.800" font-family="Liberation Mono, monospace" font-weight="bold" font-size="8.200" fill="#7d8d8d" textLength="4.200" lengthAdjust="spacingAndGlyphs">C</text></svg></div>
<div class="fc" style="left:1106px;width:90px"><svg class="abs" style="left:6.3px;top:6.8px" width="20" height="13.2" viewBox="0 0 20 13.2"><rect x="5.300" y="0" width="9" height="13.200" rx=".8" fill="#3fab4a"/><text x="0" y="9.800" font-family="Liberation Mono, monospace" font-weight="bold" font-size="8.200" fill="#7d8d8d" textLength="4.200" lengthAdjust="spacingAndGlyphs">A</text><text x="7.600" y="9.800" font-family="Liberation Mono, monospace" font-weight="bold" font-size="8.200" fill="#cfeed2" textLength="4.400" lengthAdjust="spacingAndGlyphs">B</text><text x="15.400" y="9.800" font-family="Liberation Mono, monospace" font-weight="bold" font-size="8.200" fill="#7d8d8d" textLength="4.200" lengthAdjust="spacingAndGlyphs">C</text></svg></div>
<div class="abs" style="left:0;top:93px;width:1195px;height:3.600px;background:#f5f5f7;border-top:1.300px solid #c4c4cc"></div>
<div class="row" style="top:95.60px">
<div class="c ind" style="left:0px;width:19.5px"></div>
<div class="c" style="left:19.5px;width:102.5px">CUS001</div>
<div class="c" style="left:122px;width:97.5px">RE</div>
<div class="c" style="left:219.5px;width:175.0px">Cash Sales Account</div>
<div class="c" style="left:394.5px;width:87.5px"></div>
<div class="c" style="left:482px;width:75px"></div>
<div class="c" style="left:557px;width:102.5px">Durban</div>
<div class="c r" style="left:659.5px;width:136.5px">10,000.00</div>
<div class="c w" style="left:796px;width:151px"></div>
<div class="c p" style="left:947px;width:159px">000 000 0000</div>
<div class="c" style="left:1106px;width:90px">0000000000</div>
</div>
<div class="row sel" style="top:121.87px">
<div class="c ind" style="left:0px;width:19.5px"><div class="abs" style="left:7px;top:8px;width:0;height:0;border:5px solid transparent;border-left:5px solid #22222c;border-right:none"></div></div>
<div class="c" style="left:19.5px;width:102.5px">HOP001</div>
<div class="c" style="left:122px;width:97.5px">RE</div>
<div class="c" style="left:219.5px;width:175.0px">Hope Works (Pty) Ltd</div>
<div class="c" style="left:394.5px;width:87.5px"></div>
<div class="c" style="left:482px;width:75px"></div>
<div class="c" style="left:557px;width:102.5px">Durban</div>
<div class="c r" style="left:659.5px;width:136.5px">5,000.00</div>
<div class="c w" style="left:796px;width:151px">www.hopeworks.co.za</div>
<div class="c p" style="left:947px;width:159px">031 123 4567</div>
<div class="c" style="left:1106px;width:90px">9876543210</div>
</div>
<div class="row" style="top:148.14px">
<div class="c ind" style="left:0px;width:19.5px"></div>
<div class="c" style="left:19.5px;width:102.5px">DER001</div>
<div class="c" style="left:122px;width:97.5px">RE</div>
<div class="c" style="left:219.5px;width:175.0px">Derton / Technologies</div>
<div class="c" style="left:394.5px;width:87.5px"></div>
<div class="c" style="left:482px;width:75px"></div>
<div class="c" style="left:557px;width:102.5px">Durban</div>
<div class="c r" style="left:659.5px;width:136.5px">250.00</div>
<div class="c w" style="left:796px;width:151px">www.dertonweb.co.za</div>
<div class="c p" style="left:947px;width:159px">031 123 4785</div>
<div class="c" style="left:1106px;width:90px">98/7654321</div>
</div>
<div class="row" style="top:174.41px">
<div class="c ind" style="left:0px;width:19.5px"></div>
<div class="c" style="left:19.5px;width:102.5px">OFF001</div>
<div class="c" style="left:122px;width:97.5px">RE</div>
<div class="c" style="left:219.5px;width:175.0px">Office Supplies Unlimited</div>
<div class="c" style="left:394.5px;width:87.5px"></div>
<div class="c" style="left:482px;width:75px"></div>
<div class="c" style="left:557px;width:102.5px">Durban</div>
<div class="c r" style="left:659.5px;width:136.5px">75,000,000.00</div>
<div class="c w" style="left:796px;width:151px">www.cnn.co.za</div>
<div class="c p" style="left:947px;width:159px">031 789 4561</div>
<div class="c" style="left:1106px;width:90px">9874563210</div>
</div>
<div class="row" style="top:200.68px">
<div class="c ind" style="left:0px;width:19.5px"></div>
<div class="c" style="left:19.5px;width:102.5px">YES001</div>
<div class="c" style="left:122px;width:97.5px">CO</div>
<div class="c" style="left:219.5px;width:175.0px">Young Electric</div>
<div class="c" style="left:394.5px;width:87.5px"></div>
<div class="c" style="left:482px;width:75px"></div>
<div class="c" style="left:557px;width:102.5px">Durban</div>
<div class="c r" style="left:659.5px;width:136.5px">100,000.00</div>
<div class="c w" style="left:796px;width:151px"></div>
<div class="c p" style="left:947px;width:159px">082555555</div>
<div class="c" style="left:1106px;width:90px">2314687645</div>
</div>
<div class="row" style="top:226.95px">
<div class="c ind" style="left:0px;width:19.5px"></div>
<div class="c" style="left:19.5px;width:102.5px">WES001</div>
<div class="c" style="left:122px;width:97.5px">RE</div>
<div class="c" style="left:219.5px;width:175.0px">Westwood Dynamic</div>
<div class="c" style="left:394.5px;width:87.5px"></div>
<div class="c" style="left:482px;width:75px"></div>
<div class="c" style="left:557px;width:102.5px">Durban</div>
<div class="c r" style="left:659.5px;width:136.5px">10,000,000.00</div>
<div class="c w" style="left:796px;width:151px">www.web.co.za</div>
<div class="c p" style="left:947px;width:159px">031 789 4561</div>
<div class="c" style="left:1106px;width:90px">1234567890</div>
</div>
<div class="row" style="top:253.22px">
<div class="c ind" style="left:0px;width:19.5px"></div>
<div class="c" style="left:19.5px;width:102.5px">TIA001</div>
<div class="c" style="left:122px;width:97.5px">RE</div>
<div class="c" style="left:219.5px;width:175.0px">Titan Group</div>
<div class="c" style="left:394.5px;width:87.5px"></div>
<div class="c" style="left:482px;width:75px"></div>
<div class="c" style="left:557px;width:102.5px">Durban</div>
<div class="c r" style="left:659.5px;width:136.5px">100,000.00</div>
<div class="c w" style="left:796px;width:151px">www.web.co.za</div>
<div class="c p" style="left:947px;width:159px">031 852 9632</div>
<div class="c" style="left:1106px;width:90px">1232587410</div>
</div>
<div class="row" style="top:279.49px">
<div class="c ind" style="left:0px;width:19.5px"></div>
<div class="c" style="left:19.5px;width:102.5px">BOT0001</div>
<div class="c" style="left:122px;width:97.5px">IT</div>
<div class="c" style="left:219.5px;width:175.0px">Bothas Networking inc</div>
<div class="c" style="left:394.5px;width:87.5px"></div>
<div class="c" style="left:482px;width:75px"></div>
<div class="c" style="left:557px;width:102.5px">Durban</div>
<div class="c r" style="left:659.5px;width:136.5px">50,000.00</div>
<div class="c w" style="left:796px;width:151px">www.web.co.za</div>
<div class="c p" style="left:947px;width:159px">031 789 4563</div>
<div class="c" style="left:1106px;width:90px">9874563200</div>
</div>
<div class="row" style="top:305.76px">
<div class="c ind" style="left:0px;width:19.5px"></div>
<div class="c" style="left:19.5px;width:102.5px">SAM001</div>
<div class="c" style="left:122px;width:97.5px">RE</div>
<div class="c" style="left:219.5px;width:175.0px">Samanthas Diner</div>
<div class="c" style="left:394.5px;width:87.5px"></div>
<div class="c" style="left:482px;width:75px"></div>
<div class="c" style="left:557px;width:102.5px">Durban</div>
<div class="c r" style="left:659.5px;width:136.5px">45,000.00</div>
<div class="c w" style="left:796px;width:151px">www.samsdiner.co.za</div>
<div class="c p" style="left:947px;width:159px">031 123 4567</div>
<div class="c" style="left:1106px;width:90px">1234567890</div>
</div>
<div class="row" style="top:332.03px">
<div class="c ind" style="left:0px;width:19.5px"></div>
<div class="c" style="left:19.5px;width:102.5px">DAN001</div>
<div class="c" style="left:122px;width:97.5px">IT</div>
<div class="c" style="left:219.5px;width:175.0px">Danny Storm IT Cafe</div>
<div class="c" style="left:394.5px;width:87.5px"></div>
<div class="c" style="left:482px;width:75px"></div>
<div class="c" style="left:557px;width:102.5px">Durban</div>
<div class="c r" style="left:659.5px;width:136.5px">75,000.00</div>
<div class="c w" style="left:796px;width:151px"></div>
<div class="c p" style="left:947px;width:159px">031 785 4785</div>
<div class="c" style="left:1106px;width:90px">1236547890</div>
</div>
<div class="row" style="top:358.30px">
<div class="c ind" style="left:0px;width:19.5px"></div>
<div class="c" style="left:19.5px;width:102.5px">PAN001</div>
<div class="c" style="left:122px;width:97.5px">RE</div>
<div class="c" style="left:219.5px;width:175.0px">Panda Copiers</div>
<div class="c" style="left:394.5px;width:87.5px"></div>
<div class="c" style="left:482px;width:75px"></div>
<div class="c" style="left:557px;width:102.5px">Durban</div>
<div class="c r" style="left:659.5px;width:136.5px">50,000.00</div>
<div class="c w" style="left:796px;width:151px"></div>
<div class="c p" style="left:947px;width:159px">031 123 4567</div>
<div class="c" style="left:1106px;width:90px">1234567890</div>
</div>
<div class="row" style="top:384.57px">
<div class="c ind" style="left:0px;width:19.5px"></div>
<div class="c" style="left:19.5px;width:102.5px">HAC001</div>
<div class="c" style="left:122px;width:97.5px">IT</div>
<div class="c" style="left:219.5px;width:175.0px">Hack PC - IT Shop</div>
<div class="c" style="left:394.5px;width:87.5px"></div>
<div class="c" style="left:482px;width:75px"></div>
<div class="c" style="left:557px;width:102.5px">Durban</div>
<div class="c r" style="left:659.5px;width:136.5px">0.00</div>
<div class="c w" style="left:796px;width:151px"></div>
<div class="c p" style="left:947px;width:159px">031 789 4561</div>
<div class="c" style="left:1106px;width:90px">6654357190</div>
</div>
<div class="row" style="top:410.84px">
<div class="c ind" style="left:0px;width:19.5px"></div>
<div class="c" style="left:19.5px;width:102.5px">PIN0001</div>
<div class="c" style="left:122px;width:97.5px">GV</div>
<div class="c" style="left:219.5px;width:175.0px">Pink Shoes</div>
<div class="c" style="left:394.5px;width:87.5px"></div>
<div class="c" style="left:482px;width:75px"></div>
<div class="c" style="left:557px;width:102.5px">Durban</div>
<div class="c r" style="left:659.5px;width:136.5px">0.00</div>
<div class="c w" style="left:796px;width:151px"></div>
<div class="c p" style="left:947px;width:159px">031 456 7894</div>
<div class="c" style="left:1106px;width:90px">1234</div>
</div>
<div class="row" style="top:437.11px">
<div class="c ind" style="left:0px;width:19.5px"></div>
<div class="c" style="left:19.5px;width:102.5px">HIL000001</div>
<div class="c" style="left:122px;width:97.5px;letter-spacing:-.42px">HILLCRESTP</div>
<div class="c" style="left:219.5px;width:175.0px">Mary Contrary</div>
<div class="c" style="left:394.5px;width:87.5px"></div>
<div class="c" style="left:482px;width:75px"></div>
<div class="c" style="left:557px;width:102.5px">Durban</div>
<div class="c r" style="left:659.5px;width:136.5px">0.00</div>
<div class="c w" style="left:796px;width:151px"></div>
<div class="c p" style="left:947px;width:159px">083 559</div>
<div class="c" style="left:1106px;width:90px">00000</div>
</div>
<div class="row" style="top:463.38px">
<div class="c ind" style="left:0px;width:19.5px"></div>
<div class="c" style="left:19.5px;width:102.5px">SHO000001</div>
<div class="c" style="left:122px;width:97.5px;letter-spacing:-.42px">SHONGWENIP</div>
<div class="c" style="left:219.5px;width:175.0px">Mike Goldwen</div>
<div class="c" style="left:394.5px;width:87.5px"></div>
<div class="c" style="left:482px;width:75px"></div>
<div class="c" style="left:557px;width:102.5px">Durban</div>
<div class="c r" style="left:659.5px;width:136.5px">0.00</div>
<div class="c w" style="left:796px;width:151px"></div>
<div class="c p" style="left:947px;width:159px">083 559 1234</div>
<div class="c" style="left:1106px;width:90px">00000</div>
</div>
<div class="row" style="top:489.65px">
<div class="c ind" style="left:0px;width:19.5px"></div>
<div class="c" style="left:19.5px;width:102.5px">JUS001</div>
<div class="c" style="left:122px;width:97.5px">RE</div>
<div class="c" style="left:219.5px;width:175.0px">Just In Time</div>
<div class="c" style="left:394.5px;width:87.5px"></div>
<div class="c" style="left:482px;width:75px"></div>
<div class="c" style="left:557px;width:102.5px">Durban</div>
<div class="c r" style="left:659.5px;width:136.5px">50,000.00</div>
<div class="c w" style="left:796px;width:151px">www.justintime.co.za</div>
<div class="c p" style="left:947px;width:159px">031 123 4567</div>
<div class="c" style="left:1106px;width:90px">1234567890</div>
</div>
<div class="row" style="top:515.92px">
<div class="c ind" style="left:0px;width:19.5px"></div>
<div class="c" style="left:19.5px;width:102.5px">LIT0001</div>
<div class="c" style="left:122px;width:97.5px">RE</div>
<div class="c" style="left:219.5px;width:175.0px">Little Bee Honey</div>
<div class="c" style="left:394.5px;width:87.5px"></div>
<div class="c" style="left:482px;width:75px"></div>
<div class="c" style="left:557px;width:102.5px">Durban</div>
<div class="c r" style="left:659.5px;width:136.5px">0.00</div>
<div class="c w" style="left:796px;width:151px">www.bee.co.za</div>
<div class="c p" style="left:947px;width:159px">031 123 4567</div>
<div class="c" style="left:1106px;width:90px">1234567890</div>
</div>
<div class="row" style="top:542.19px">
<div class="c ind" style="left:0px;width:19.5px"></div>
<div class="c" style="left:19.5px;width:102.5px">GRE001</div>
<div class="c" style="left:122px;width:97.5px">RE</div>
<div class="c" style="left:219.5px;width:175.0px">Green Tea Supplies</div>
<div class="c" style="left:394.5px;width:87.5px"></div>
<div class="c" style="left:482px;width:75px"></div>
<div class="c" style="left:557px;width:102.5px">Durban</div>
<div class="c r" style="left:659.5px;width:136.5px">75,000.00</div>
<div class="c w" style="left:796px;width:151px"></div>
<div class="c p" style="left:947px;width:159px">031 456 7891</div>
<div class="c" style="left:1106px;width:90px">1234567890</div>
</div>
<div class="row" style="top:568.46px">
<div class="c ind" style="left:0px;width:19.5px"></div>
<div class="c" style="left:19.5px;width:102.5px">FIN0001</div>
<div class="c" style="left:122px;width:97.5px">RE</div>
<div class="c" style="left:219.5px;width:175.0px">Fine Hair Salon</div>
<div class="c" style="left:394.5px;width:87.5px"></div>
<div class="c" style="left:482px;width:75px"></div>
<div class="c" style="left:557px;width:102.5px">Durban</div>
<div class="c r" style="left:659.5px;width:136.5px">0.00</div>
<div class="c w" style="left:796px;width:151px">www.finehair.co.za</div>
<div class="c p" style="left:947px;width:159px">031 123 4567</div>
<div class="c" style="left:1106px;width:90px">1234</div>
</div>
<div class="row" style="top:594.73px">
<div class="c ind" style="left:0px;width:19.5px"></div>
<div class="c" style="left:19.5px;width:102.5px">BET0001</div>
<div class="c" style="left:122px;width:97.5px">RE</div>
<div class="c" style="left:219.5px;width:175.0px">Betties Summer Shop at t...</div>
<div class="c" style="left:394.5px;width:87.5px"></div>
<div class="c" style="left:482px;width:75px"></div>
<div class="c" style="left:557px;width:102.5px">Durban</div>
<div class="c r" style="left:659.5px;width:136.5px">0.00</div>
<div class="c w" style="left:796px;width:151px"></div>
<div class="c p" style="left:947px;width:159px"></div>
<div class="c" style="left:1106px;width:90px">1234</div>
</div>
<div class="row" style="top:621.00px">
<div class="c ind" style="left:0px;width:19.5px"></div>
<div class="c" style="left:19.5px;width:102.5px">biancad</div>
<div class="c" style="left:122px;width:97.5px">RE</div>
<div class="c" style="left:219.5px;width:175.0px">North West Branch</div>
<div class="c" style="left:394.5px;width:87.5px"></div>
<div class="c" style="left:482px;width:75px"></div>
<div class="c" style="left:557px;width:102.5px">Durban</div>
<div class="c r" style="left:659.5px;width:136.5px">0.00</div>
<div class="c w" style="left:796px;width:151px"></div>
<div class="c p" style="left:947px;width:159px"></div>
<div class="c" style="left:1106px;width:90px">0</div>
</div>
<div class="row" style="top:647.27px">
<div class="c ind" style="left:0px;width:19.5px"></div>
<div class="c" style="left:19.5px;width:102.5px">DAN002</div>
<div class="c" style="left:122px;width:97.5px">IT</div>
<div class="c" style="left:219.5px;width:175.0px">Dancing Shoes</div>
<div class="c" style="left:394.5px;width:87.5px"></div>
<div class="c" style="left:482px;width:75px"></div>
<div class="c" style="left:557px;width:102.5px">Durban</div>
<div class="c r" style="left:659.5px;width:136.5px">10,000.00</div>
<div class="c w" style="left:796px;width:151px"></div>
<div class="c p" style="left:947px;width:159px">031 123 4567</div>
<div class="c" style="left:1106px;width:90px">1234567890</div>
</div>
<div class="abs" style="left:1174.3px;top:66px;width:22px;height:601px;background:#f1f1f4"></div>
<div class="abs" style="left:1180.3px;top:74.500px;width:0;height:0;border:4.300px solid transparent;border-bottom:4.500px solid #8c8c98;border-top:none"></div>
<div class="abs" style="left:1180.800px;top:87.400px;width:8.200px;height:200.800px;border:1px solid #bcbcc6;border-radius:4px;background:linear-gradient(90deg,#e2e2e7,#f5f5f8)"></div>
<div class="abs" style="left:1180.300px;top:653px;width:0;height:0;border:4.300px solid transparent;border-top:4.500px solid #8c8c98;border-bottom:none"></div>
<div class="abs" style="left:0;top:666px;width:1195px;height:21px;background:#f7f7f9"></div>
<div class="abs" style="left:7px;top:672px;width:0;height:0;border:4px solid transparent;border-right:5px solid #8a8a94;border-left:none"></div>
<div class="abs" style="left:22px;top:671.800px;width:281px;height:8px;border:1px solid #b8b8c2;border-radius:4px;background:linear-gradient(#f6f6f8,#dedee4)"></div>
<div class="abs" style="left:1160px;top:672px;width:0;height:0;border:4px solid transparent;border-left:5px solid #8a8a94;border-right:none"></div>
</div>
<div id="status">
<div class="s" style="left:12px">Open Windows</div><div class="abs" style="left:107px;top:15px;width:0;height:0;border:4px solid transparent;border-top:5px solid #34343e;border-bottom:none"></div>
<div class="sep" style="left:851.2px"></div>
<div class="sep" style="left:969.1px"></div>
<div class="sep" style="left:1059.9px"></div>
<div class="sep" style="left:1182.1px"></div>
<div class="s" style="left:863.5px;letter-spacing:-0.1px">User : JulandaK</div>
<div class="s" style="left:980.4px;letter-spacing:0.26px">16/09/2021</div>
<div class="s" style="left:1070.4px;letter-spacing:0.32px">Version : 2.5.0.4</div>
<div class="s" style="left:1193px;letter-spacing:0.05px">Example Company v2.5.0.0</div>
<svg class="abs" style="left:1380px;top:20px" width="13" height="13" viewBox="0 0 13 13"><path d="M12 1L1 12M12 5L5 12M12 9L9 12" stroke="#9a9aa6" stroke-width="1.200"/></svg>
</div>
<div class="frame" style="left:0;top:58px;width:3px;height:844px;border-right:1px solid #a9a9b3"></div>
<div class="frame" style="left:1395px;top:58px;width:2px;height:115px;background:#b4b4be"></div>
<div class="frame" style="left:1394px;top:172px;width:3px;height:730px;border-left:1px solid #a9a9b3"></div>
<div class="frame" style="left:0;top:899px;width:1397px;height:3px;border-top:1px solid #a9a9b3;background:#cfcfd6"></div><svg class="abs" style="left:0;top:0;pointer-events:none" width="1397" height="902" viewBox="0 0 1397 902">
<line x1="292" y1="17" x2="438.4" y2="15.5" stroke="#4169e1" stroke-width="2.8"/><polygon points="455.7,15.3 438.5,22.3 438.3,8.7" fill="#4169e1"/>
<circle cx="292" cy="17" r="14.2" fill="#4169e1"/><text x="291.7" y="23" text-anchor="middle" font-family="DejaVu Sans, Liberation Sans, sans-serif" font-size="16.4" fill="#0a0a28">1</text>
<line x1="766" y1="162" x2="821.0" y2="98.4" stroke="#4169e1" stroke-width="2.8"/><polygon points="831.8,85.9 826.1,102.8 815.9,94.0" fill="#4169e1"/>
<circle cx="766" cy="162" r="14.8" fill="#4169e1"/><text x="765.7" y="168" text-anchor="middle" font-family="DejaVu Sans, Liberation Sans, sans-serif" font-size="16.4" fill="#0a0a28">2</text>
<line x1="1034" y1="157" x2="979.2" y2="133.6" stroke="#4169e1" stroke-width="2.8"/><polygon points="963.7,126.9 981.9,127.4 976.6,139.7" fill="#4169e1"/>
<circle cx="1034" cy="157" r="14.8" fill="#4169e1"/><text x="1033.7" y="163" text-anchor="middle" font-family="DejaVu Sans, Liberation Sans, sans-serif" font-size="16.4" fill="#0a0a28">3</text>
<line x1="206.9" y1="190" x2="206.9" y2="275.0" stroke="#4169e1" stroke-width="2.8"/><polygon points="206.9,292.4 199.8,275.0 214.0,275.0" fill="#4169e1"/>
<circle cx="207.1" cy="190" r="15" fill="#4169e1"/><text x="206.79999999999998" y="196" text-anchor="middle" font-family="DejaVu Sans, Liberation Sans, sans-serif" font-size="16.4" fill="#0a0a28">4</text>
<line x1="173.2" y1="402" x2="136.1" y2="558.6" stroke="#4169e1" stroke-width="2.8"/><polygon points="132.4,574.4 129.8,557.1 142.5,560.1" fill="#4169e1"/>
<circle cx="173.2" cy="402" r="14.8" fill="#4169e1"/><text x="172.89999999999998" y="408" text-anchor="middle" font-family="DejaVu Sans, Liberation Sans, sans-serif" font-size="16.4" fill="#0a0a28">5</text>
<rect x="197.700" y="300.100" width="18.800" height="23.300" fill="none" stroke="#4169e1" stroke-width="3"/>
<rect x="20.1" y="540.8" width="166.9" height="82.9" fill="none" stroke="#4169e1" stroke-width="3"/>
</svg>
</div>
</body></html>
